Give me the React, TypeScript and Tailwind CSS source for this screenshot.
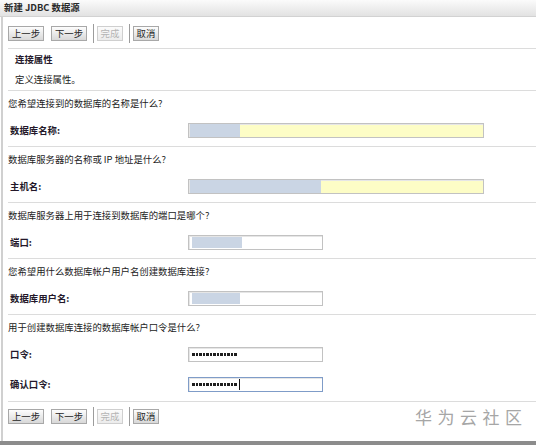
import React from "react";

type BtnProps = { label: string; wide?: boolean; disabled?: boolean };

function Btn({ label, wide, disabled }: BtnProps) {
  return (
    <div
      className={
        "h-[15px] flex items-center justify-center border bg-linear-to-b text-[9.4px] leading-none " +
        (wide ? "w-[36px] " : "w-[26px] ") +
        (disabled
          ? "border-[#cfcfcf] from-[#fbfbfb] to-[#ececec] text-[#b4b4b4]"
          : "border-[#a8a8a8] from-[#fdfdfd] to-[#d8d8d8] text-[#1e1e1e]")
      }
    >
      {label}
    </div>
  );
}

function Sep() {
  return <div className="w-px h-[19px] bg-[#9c9c9c]" />;
}

function Toolbar() {
  return (
    <div className="flex items-center">
      <Btn label="上一步" wide />
      <div className="w-[7px]" />
      <Btn label="下一步" wide />
      <div className="w-[6px]" />
      <Sep />
      <div className="w-[3px]" />
      <Btn label="完成" disabled />
      <div className="w-[6px]" />
      <Sep />
      <div className="w-[3px]" />
      <Btn label="取消" />
    </div>
  );
}

function Dots({ cursor }: { cursor?: boolean }) {
  return (
    <div className="flex items-center h-full pl-[3px] gap-[1px]">
      {Array.from({ length: 13 }).map((_, i) => (
        <span key={i} className="w-[2.5px] h-[2.5px] bg-[#1e1e1e]" />
      ))}
      {cursor && <span className="ml-[1px] w-px h-[11px] bg-[#111]" />}
    </div>
  );
}

type FieldProps = {
  label: string;
  wide?: boolean;
  yellow?: boolean;
  sel?: number;
  selInset?: boolean;
  password?: boolean;
  focused?: boolean;
};

function Field({ label, wide, yellow, sel, selInset, password, focused }: FieldProps) {
  return (
    <div className="flex items-center h-full">
      <div className="w-[180px] pl-[2px] font-bold text-[#24182a] text-[9.4px] leading-none">
        {label}
      </div>
      <div
        className={
          "h-[15px] border shadow-[inset_1px_1px_0_#e6e6e6] " +
          (wide ? "w-[296px] " : "w-[135px] ") +
          (yellow ? "bg-[#fdfdc6] " : "bg-white ") +
          (focused ? "border-[#7f9cc8]" : "border-[#c2c2c2]")
        }
      >
        {sel !== undefined && (
          <div className={"h-full " + (selInset ? "pl-[3px] pt-[1px] pb-px" : "pl-px")}>
            <div className="h-full bg-[#cad5e4]" style={{ width: sel }} />
          </div>
        )}
        {password && <Dots cursor={focused} />}
      </div>
    </div>
  );
}

function Question({ text }: { text: string }) {
  return (
    <div className="h-[26px] flex items-center text-[9.4px] leading-none text-[#222]">{text}</div>
  );
}

export default function App() {
  return (
    <div className="w-[536px] h-[445px] bg-white flex flex-col overflow-hidden relative font-['Noto_Sans_CJK_SC','Noto_Sans',sans-serif]">
      {/* window title */}
      <div className="h-[17px] shrink-0 flex items-center pl-[4px] bg-linear-to-b from-[#fbfbfb] to-[#e2e2e2] border-b border-[#d2d2d2]">
        <span className="font-bold text-[9.4px] leading-none text-[#2a2a2a]">新建 JDBC 数据源</span>
      </div>

      <div className="flex-1 flex flex-col ml-px border-l-2 border-[#d0d0d0]">
        <div className="h-[31px] flex items-center pl-[5px] pt-[2px]">
          <Toolbar />
        </div>

        <div className="ml-[5px] flex flex-col">
          {/* step heading */}
          <div className="border-t border-[#dcdcdc] pb-px">
            <div className="h-[22px] flex items-center pl-[7px] font-bold text-[9.4px] leading-none text-[#24182a]">
              连接属性
            </div>
            <div className="h-[18px] flex items-center pl-[7px] text-[9.4px] leading-none text-[#222]">
              定义连接属性。
            </div>
          </div>

          <div className="border-t border-[#dcdcdc] pb-[2px]">
            <Question text="您希望连接到的数据库的名称是什么?" />
            <div className="h-[27px]">
              <Field label="数据库名称:" wide yellow sel={50} />
            </div>
          </div>

          <div className="border-t border-[#dcdcdc] pb-[2px]">
            <Question text="数据库服务器的名称或 IP 地址是什么?" />
            <div className="h-[27px]">
              <Field label="主机名:" wide yellow sel={131} />
            </div>
          </div>

          <div className="border-t border-[#dcdcdc] pb-[2px]">
            <Question text="数据库服务器上用于连接到数据库的端口是哪个?" />
            <div className="h-[27px]">
              <Field label="端口:" sel={50} selInset />
            </div>
          </div>

          <div className="border-t border-[#dcdcdc] pb-[2px]">
            <Question text="您希望用什么数据库帐户用户名创建数据库连接?" />
            <div className="h-[27px]">
              <Field label="数据库用户名:" sel={48} selInset />
            </div>
          </div>

          <div className="border-t border-[#dcdcdc]">
            <Question text="用于创建数据库连接的数据库帐户口令是什么?" />
            <div className="h-[27px]">
              <Field label="口令:" password />
            </div>
            <div className="h-[33px]">
              <Field label="确认口令:" password focused />
            </div>
          </div>

          <div className="border-t border-[#dcdcdc] h-[30px] flex items-center">
            <Toolbar />
          </div>
        </div>
      </div>

      <div className="h-[4px] shrink-0 bg-[#8c8c8c]" />

      {/* community watermark */}
      <div className="absolute left-[415px] top-[408px] text-[17px] leading-none tracking-[5.5px] text-[#a6a6a6]">
        华为云社区
      </div>
    </div>
  );
}
